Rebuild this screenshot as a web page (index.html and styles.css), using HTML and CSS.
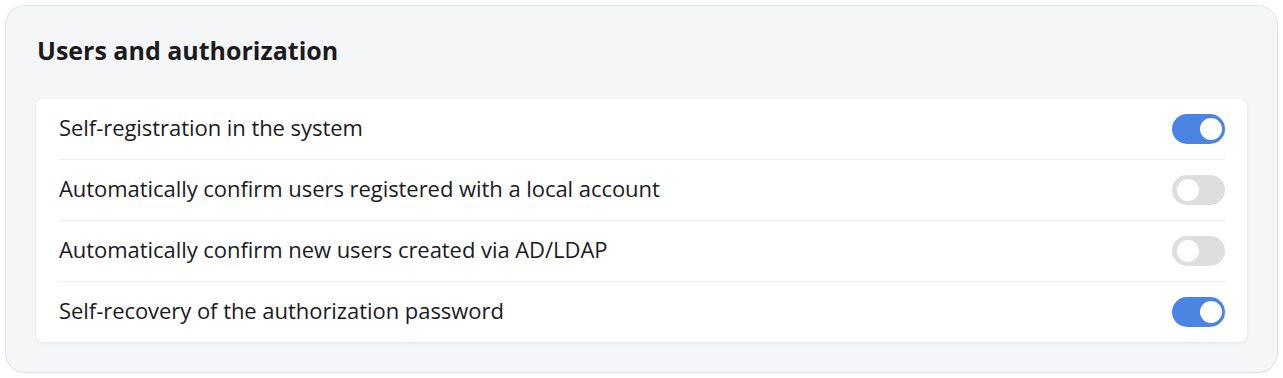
FILE: index.html
```html
<!DOCTYPE html>
<html lang="en">
<head>
  <meta charset="UTF-8">
  <title>Users and authorization</title>
  <link rel="stylesheet" href="styles.css">
</head>
<body>
  <section class="panel">
    <h2 class="panel-title">Users and authorization</h2>
    <div class="settings">
      <div class="setting">
        <span class="setting-label">Self-registration in the system</span>
        <span class="toggle on"></span>
      </div>
      <div class="setting">
        <span class="setting-label">Automatically confirm users registered with a local account</span>
        <span class="toggle"></span>
      </div>
      <div class="setting">
        <span class="setting-label">Automatically confirm new users created via AD/LDAP</span>
        <span class="toggle"></span>
      </div>
      <div class="setting">
        <span class="setting-label">Self-recovery of the authorization password</span>
        <span class="toggle on"></span>
      </div>
    </div>
  </section>
</body>
</html>
```

FILE: styles.css
```css
* {
  margin: 0;
  padding: 0;
  box-sizing: border-box;
}

body {
  font-family: "Open Sans", Lato, sans-serif;
  background: #ffffff;
  color: #1b1b1f;
  padding: 5px 5px 5px 5px;
}

.panel {
  background: #f5f6f8;
  border: 1px solid #e3e4e7;
  border-radius: 20px;
  padding: 27px 30px 30px 30px;
  box-shadow: 0 1px 2px rgba(0, 0, 0, 0.04);
}

.panel-title {
  font-size: 25px;
  font-weight: 700;
  line-height: 34px;
  margin-bottom: 32px;
  padding-left: 1px;
}

.settings {
  background: #ffffff;
  border-radius: 7px;
  box-shadow: 0 1px 3px rgba(0, 0, 0, 0.08);
  padding: 0 22px 0 23px;
}

.setting {
  display: flex;
  align-items: center;
  justify-content: space-between;
  height: 61px;
  border-bottom: 1px solid #ececef;
}

.setting:last-child {
  border-bottom: none;
  height: 60px;
}

.setting-label {
  font-size: 22px;
  line-height: 28px;
  letter-spacing: -0.05px;
  margin-top: -4px;
}

.toggle {
  position: relative;
  width: 53px;
  height: 30px;
  border-radius: 15px;
  background: #dedede;
}

.toggle::after {
  content: "";
  position: absolute;
  top: 4px;
  left: 5px;
  width: 22px;
  height: 22px;
  border-radius: 50%;
  background: #ffffff;
}

.toggle.on {
  background: #4b84e3;
}

.toggle.on::after {
  left: 28px;
}
```
